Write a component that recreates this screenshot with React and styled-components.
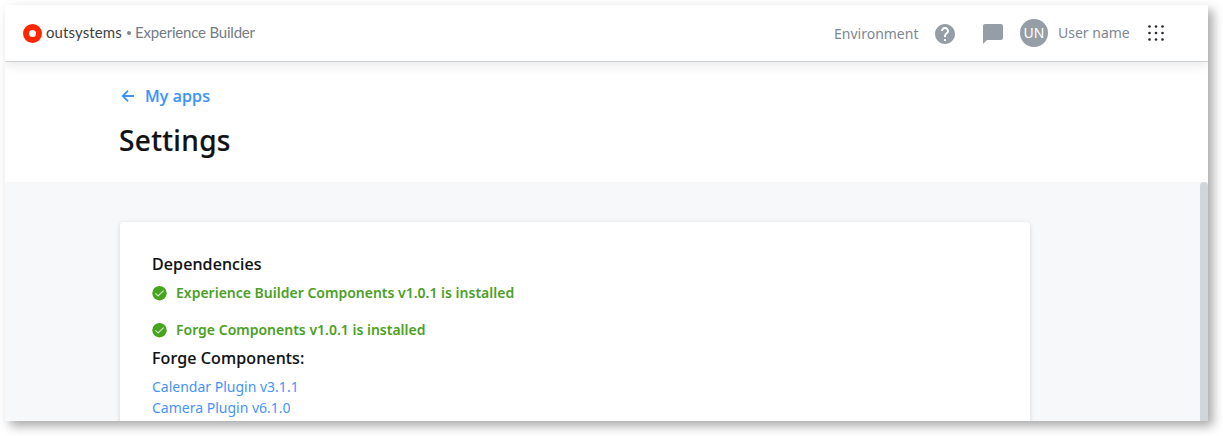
import React from "react";
import styled, { createGlobalStyle } from "styled-components";

const GlobalStyle = createGlobalStyle`
  * { box-sizing: border-box; }
  body { margin: 0; background: #fff; overflow: hidden; font-family: "Noto Sans", sans-serif; }
  h1, h2, p, ul { margin: 0; padding: 0; }
  svg { display: block; flex: none; }
`;

const Page = styled.div`
  height: 436px;
  padding: 5px 15px 15px 5px;
`;

const Window = styled.div`
  width: 1203px;
  height: 416px;
  display: flex;
  flex-direction: column;
  overflow: hidden;
  background: #fff;
  box-shadow: 5px 5px 10px rgba(0, 0, 0, 0.34);
`;

const TopBar = styled.header`
  flex: none;
  position: relative;
  display: flex;
  align-items: center;
  justify-content: space-between;
  height: 57px;
  padding: 0 43px 0 18px;
  border-bottom: 1px solid #ced4d8;
  box-shadow: 0 2px 12px rgba(0, 0, 0, 0.11);
`;

const Brand = styled.div`
  display: flex;
  align-items: center;
  font-family: Lato, sans-serif;
  line-height: 20px;
  white-space: nowrap;
`;

const Wordmark = styled.span`
  width: 76px;
  margin: -2px 5px 0 4px;
  font-size: 15px;
  letter-spacing: 0.1px;
  color: #3f4143;
`;

const Bullet = styled.span`
  width: 4px;
  height: 4px;
  margin-right: 4px;
  border-radius: 50%;
  background: #80868c;
`;

const Product = styled.span`
  margin-top: -2px;
  font-size: 15px;
  letter-spacing: -0.2px;
  color: #757c83;
`;

const Tools = styled.div`
  display: flex;
  align-items: center;
  font-size: 14px;
  line-height: 20px;
  color: #7d8791;
`;

const ToolLabel = styled.span`
  width: ${(p) => p.$width}px;
  margin-top: ${(p) => p.$shift || 0}px;
  white-space: nowrap;
`;

const ToolIcon = styled.svg`
  width: 24px;
  height: 24px;
  margin-left: ${(p) => p.$gap}px;
  fill: #959ea7;
`;

const Avatar = styled.span`
  width: 28px;
  height: 28px;
  margin: 0 10px 0 15px;
  border-radius: 50%;
  background: #959ea7;
  color: #fff;
  text-align: center;
  line-height: 28px;
`;

const Heading = styled.section`
  flex: none;
  height: 120px;
  padding: 22px 0 0 114px;
`;

const BackLink = styled.a`
  display: flex;
  align-items: center;
  gap: 9px;
  height: 24px;
  font-size: 16px;
  font-weight: 500;
  line-height: 24px;
  letter-spacing: 0.15px;
  -webkit-text-stroke: 0.2px currentColor;
  color: #3b94fb;
`;

const Title = styled.h1`
  margin-top: 14px;
  font-size: 28px;
  font-weight: 500;
  line-height: 36px;
  letter-spacing: 0.35px;
  -webkit-text-stroke: 0.2px currentColor;
  color: #101213;
`;

const Content = styled.main`
  flex: 1;
  min-height: 0;
  display: flex;
  justify-content: space-between;
  padding-left: 115px;
  background: #f6f8fa;
`;

const Card = styled.section`
  width: 910px;
  height: 260px;
  margin-top: 40px;
  padding: 30px 32px;
  border-radius: 4px;
  background: #fff;
  box-shadow: 0 1px 5px rgba(0, 0, 0, 0.14);
`;

const Scrollbar = styled.div`
  width: 8px;
  height: 300px;
  border-radius: 4px;
  background: #d0d6da;
`;

const Subheading = styled.h2`
  font-size: 16px;
  font-weight: 500;
  line-height: 24px;
  letter-spacing: 0.12px;
  -webkit-text-stroke: 0.15px currentColor;
  color: #101213;
`;

const Status = styled.p`
  display: flex;
  align-items: center;
  gap: 9px;
  height: 20px;
  margin: ${(p) => p.$margin};
  font-size: 14px;
  font-weight: 600;
  line-height: 20px;
  color: #4c9f26;
`;

const PluginList = styled.ul`
  margin-top: 6px;
  list-style: none;
  font-size: 14px;
  line-height: 21px;
  color: #4793fa;
`;

const CheckIcon = () => (
  <svg width="15" height="15" viewBox="0 0 15 15">
    <circle cx="7.5" cy="7.2" r="7.2" fill="#46a41d" />
    <path d="M3.4 7.4 6.1 10 11.6 4.6" fill="none" stroke="#cde8c2" strokeWidth="1.25" />
  </svg>
);

const Logo = () => (
  <svg width="19" height="19" viewBox="0 0 19 19">
    <circle cx="9.5" cy="9.5" r="6.5" fill="none" stroke="#ff2600" strokeWidth="6" />
  </svg>
);

const BackArrow = () => (
  <svg width="17" height="16" viewBox="0 0 17 16">
    <path d="M15 8H4M9 2.7 3.7 8 9 13.3" fill="none" stroke="#3b94fb" strokeWidth="1.8" />
  </svg>
);

const AppsGrid = styled.svg`
  width: 18px;
  height: 18px;
  fill: #272b30;
`;

const dots = [2.5, 9, 15.5];

export default function App() {
  return (
    <Page>
      <GlobalStyle />
      <Window>
        <TopBar>
          <Brand>
            <Logo />
            <Wordmark>outsystems</Wordmark>
            <Bullet />
            <Product>Experience Builder</Product>
          </Brand>
          <Tools>
            <ToolLabel $width={85} $shift={2}>Environment</ToolLabel>
            <ToolIcon $gap={14} viewBox="0 0 24 24">
              <path d="M12 2C6.48 2 2 6.48 2 12s4.48 10 10 10 10-4.48 10-10S17.52 2 12 2zm1 17h-2v-2h2v2zm2.07-7.75-.9.92C13.45 12.9 13 13.5 13 15h-2v-.5c0-1.1.45-2.1 1.17-2.83l1.24-1.26c.37-.36.59-.86.59-1.41 0-1.1-.9-2-2-2s-2 .9-2 2H8c0-2.21 1.79-4 4-4s4 1.79 4 4c0 .88-.36 1.68-.93 2.25z" transform="translate(0 .9)" />
            </ToolIcon>
            <ToolIcon $gap={24} viewBox="0 0 24 24">
              <path d="M20 2H4c-1.1 0-2 .9-2 2v18l4-4h14c1.1 0 2-.9 2-2V4c0-1.1-.9-2-2-2z" transform="translate(0 .9)" />
            </ToolIcon>
            <Avatar>UN</Avatar>
            <ToolLabel $width={89}>User name</ToolLabel>
            <AppsGrid viewBox="0 0 18 18">
              {dots.map((y) => dots.map((x) => <circle key={`${x}-${y}`} cx={x} cy={y} r="1.3" />))}
            </AppsGrid>
          </Tools>
        </TopBar>
        <Heading>
          <BackLink>
            <BackArrow />
            My apps
          </BackLink>
          <Title>Settings</Title>
        </Heading>
        <Content>
          <Card>
            <Subheading>Dependencies</Subheading>
            <Status $margin="7px 0 17px">
              <CheckIcon />
              Experience Builder Components v1.0.1 is installed
            </Status>
            <Status $margin="0 0 6px">
              <CheckIcon />
              Forge Components v1.0.1 is installed
            </Status>
            <Subheading>Forge Components:</Subheading>
            <PluginList>
              <li>Calendar Plugin v3.1.1</li>
              <li>Camera Plugin v6.1.0</li>
            </PluginList>
          </Card>
          <Scrollbar />
        </Content>
      </Window>
    </Page>
  );
}
